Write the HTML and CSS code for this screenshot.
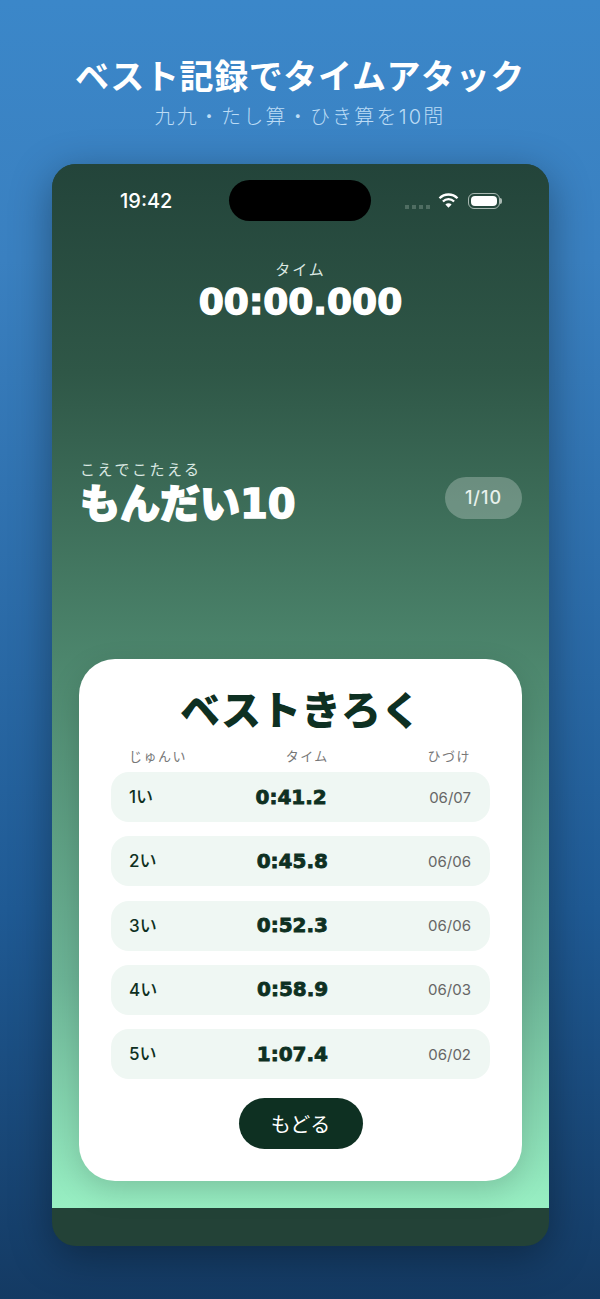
FILE: index.html

```html
<!DOCTYPE html>
<html lang="ja">
<head>
  <meta charset="UTF-8">
  <title>ベスト記録でタイムアタック</title>
  <link rel="stylesheet" href="styles.css">
</head>
<body>

  <header class="promo">
    <h1>ベスト記録でタイムアタック</h1>
    <p>九九・たし算・ひき算を10問</p>
  </header>

  <main class="phone">
    <div class="screen">
      <div class="status">
        <span class="clock">19:42</span>
        <div class="island"></div>
        <div class="status-icons">
          <div class="dots"><i></i><i></i><i></i><i></i></div>
          <svg class="wifi" width="21" height="15" viewBox="0 0 20 15">
            <path d="M1 5.2a12.8 12.8 0 0 1 18 0" fill="none" stroke="#fff" stroke-width="2.3"/>
            <path d="M4.4 8.5a8 8 0 0 1 11.2 0" fill="none" stroke="#fff" stroke-width="2.3"/>
            <path d="M10 14.8l-3.1-3.3a4.4 4.4 0 0 1 6.2 0z" fill="#fff"/>
          </svg>
          <div class="battery"><div class="battery-fill"></div></div>
          <div class="battery-nub"></div>
        </div>
      </div>

      <section class="timer">
        <div class="timer-label">タイム</div>
        <div class="timer-value">00:00.000</div>
      </section>

      <section class="question">
        <div>
          <div class="question-hint">こえでこたえる</div>
          <div class="question-title">もんだい10</div>
        </div>
        <div class="pill">1/10</div>
      </section>

      <section class="card">
        <h2>ベストきろく</h2>
        <div class="table-head">
          <span>じゅんい</span>
          <span>タイム</span>
          <span>ひづけ</span>
        </div>
        <div class="row"><span class="rank">1い</span><span class="time">0:41.2</span><span class="date">06/07</span></div>
        <div class="row"><span class="rank">2い</span><span class="time">0:45.8</span><span class="date">06/06</span></div>
        <div class="row"><span class="rank">3い</span><span class="time">0:52.3</span><span class="date">06/06</span></div>
        <div class="row"><span class="rank">4い</span><span class="time">0:58.9</span><span class="date">06/03</span></div>
        <div class="row"><span class="rank">5い</span><span class="time">1:07.4</span><span class="date">06/02</span></div>
        <button class="back">もどる</button>
      </section>
    </div>
    <div class="home-bar"></div>
  </main>

</body>
</html>
```

FILE: styles.css

```css
* {
  box-sizing: border-box;
}
body {
  margin: 0;
  height: 1299px;
  overflow: hidden;
  font-family: Inter, "Noto Sans CJK JP", sans-serif;
  background: linear-gradient(180deg, #3b87c9 0%, #3a80c0 20%, #1f5a94 70%, #143a63 100%);
}
.promo {
  height: 164px;
  padding-top: 54px;
  text-align: center;
}
.promo h1 {
  margin: 0;
  height: 46px;
  font-size: 34px;
  line-height: 46px;
  font-weight: 700;
  letter-spacing: 0.6px;
  color: #fff;
}
.promo p {
  margin: 3px 0 0;
  font-size: 20px;
  line-height: 28px;
  font-weight: 300;
  letter-spacing: 2.2px;
  color: #bcdcf5;
}
.phone {
  width: 497px;
  height: 1082px;
  margin-left: 52px;
  border-radius: 24px;
  overflow: hidden;
  background: #234237;
  box-shadow: 0 10px 40px rgba(0,0,0,0.35);
}
.screen {
  height: 1044px;
  padding: 16px 27px 0;
  background: linear-gradient(180deg, #23443a 0%, #2f5747 20%, #4f8a70 50%, #6cb496 78%, #98efc3 100%);
}
.status {
  display: flex;
  align-items: center;
  height: 41px;
  color: #fff;
}
.clock {
  width: 150px;
  padding-left: 41px;
  font-size: 20px;
  font-weight: 500;
}
.island {
  width: 142px;
  height: 41px;
  border-radius: 21px;
  background: #000;
}
.status-icons {
  display: flex;
  align-items: center;
  margin-left: 34px;
}
.dots {
  display: flex;
  gap: 3px;
  margin-top: 12px;
  margin-right: 8px;
}
.dots i {
  width: 4px;
  height: 4px;
  background: #4f6d62;
}
.wifi {
  margin-right: 9px;
}
.battery {
  width: 32px;
  height: 16px;
  padding: 2px;
  border: 1px solid #a9b8b2;
  border-radius: 6px;
}
.battery-fill {
  height: 100%;
  border-radius: 4px;
  background: #fff;
}
.battery-nub {
  width: 2px;
  height: 6px;
  border-radius: 0 2px 2px 0;
  background: #a9b8b2;
}
.timer {
  margin-top: 39px;
  text-align: center;
  color: #fff;
}
.timer-label {
  font-size: 15px;
  line-height: 20px;
  letter-spacing: 2px;
  color: #dbe8e2;
}
.timer-value {
  font-family: "DejaVu Sans", "Noto Sans CJK JP", sans-serif;
  font-size: 36px;
  line-height: 44px;
  font-weight: 900;
  -webkit-text-stroke: 1.4px #fff;
  color: #fff;
}
.question {
  display: flex;
  justify-content: space-between;
  align-items: center;
  margin-top: 137px;
  color: #fff;
}
.question-hint {
  margin-left: 1px;
  font-size: 15px;
  line-height: 18px;
  letter-spacing: 2.5px;
  color: #dbe8e2;
}
.question-title {
  margin-left: 1px;
  font-family: "DejaVu Sans", "Noto Sans CJK JP", sans-serif;
  font-size: 40px;
  line-height: 50px;
  font-weight: 900;
  -webkit-text-stroke: 1.5px #fff;
}
.pill {
  width: 77px;
  height: 42px;
  margin-top: 6px;
  border-radius: 21px;
  background: rgba(255,255,255,0.25);
  font-size: 18px;
  line-height: 42px;
  font-weight: 500;
  letter-spacing: 1px;
  text-align: center;
  color: #e8f1ed;
}
.card {
  height: 522px;
  margin-top: 130px;
  padding: 24px 32px 0;
  border-radius: 36px;
  background: #fff;
  box-shadow: 0 10px 30px rgba(0,0,0,0.15);
}
.card h2 {
  margin: 0;
  font-size: 40px;
  line-height: 56px;
  font-weight: 900;
  text-align: center;
  color: #0e3022;
}
.table-head {
  display: flex;
  justify-content: space-between;
  height: 33px;
  padding: 8px 19px 0 18px;
  font-size: 13px;
  line-height: 18px;
  letter-spacing: 1.5px;
  color: #777;
}
.row {
  display: flex;
  justify-content: space-between;
  align-items: center;
  height: 50px;
  margin-bottom: 14.25px;
  padding: 0 19px 0 18px;
  border-radius: 18px;
  background: #eff7f3;
}
.rank {
  margin-bottom: 3px;
  font-size: 17px;
  font-weight: 500;
  color: #0e3022;
}
.time {
  margin-bottom: 1px;
  font-family: "DejaVu Sans", "Noto Sans CJK JP", sans-serif;
  font-size: 20px;
  line-height: 24px;
  font-weight: 900;
  -webkit-text-stroke: 0.8px #0e3022;
  color: #0e3022;
}
.date {
  font-size: 15px;
  color: #666;
}
.back {
  display: block;
  width: 124px;
  height: 51px;
  margin: 19px auto 0;
  border: 0;
  border-radius: 26px;
  background: #0e3022;
  font-family: inherit;
  font-size: 20px;
  color: #fff;
}
.home-bar {
  height: 38px;
}
```
